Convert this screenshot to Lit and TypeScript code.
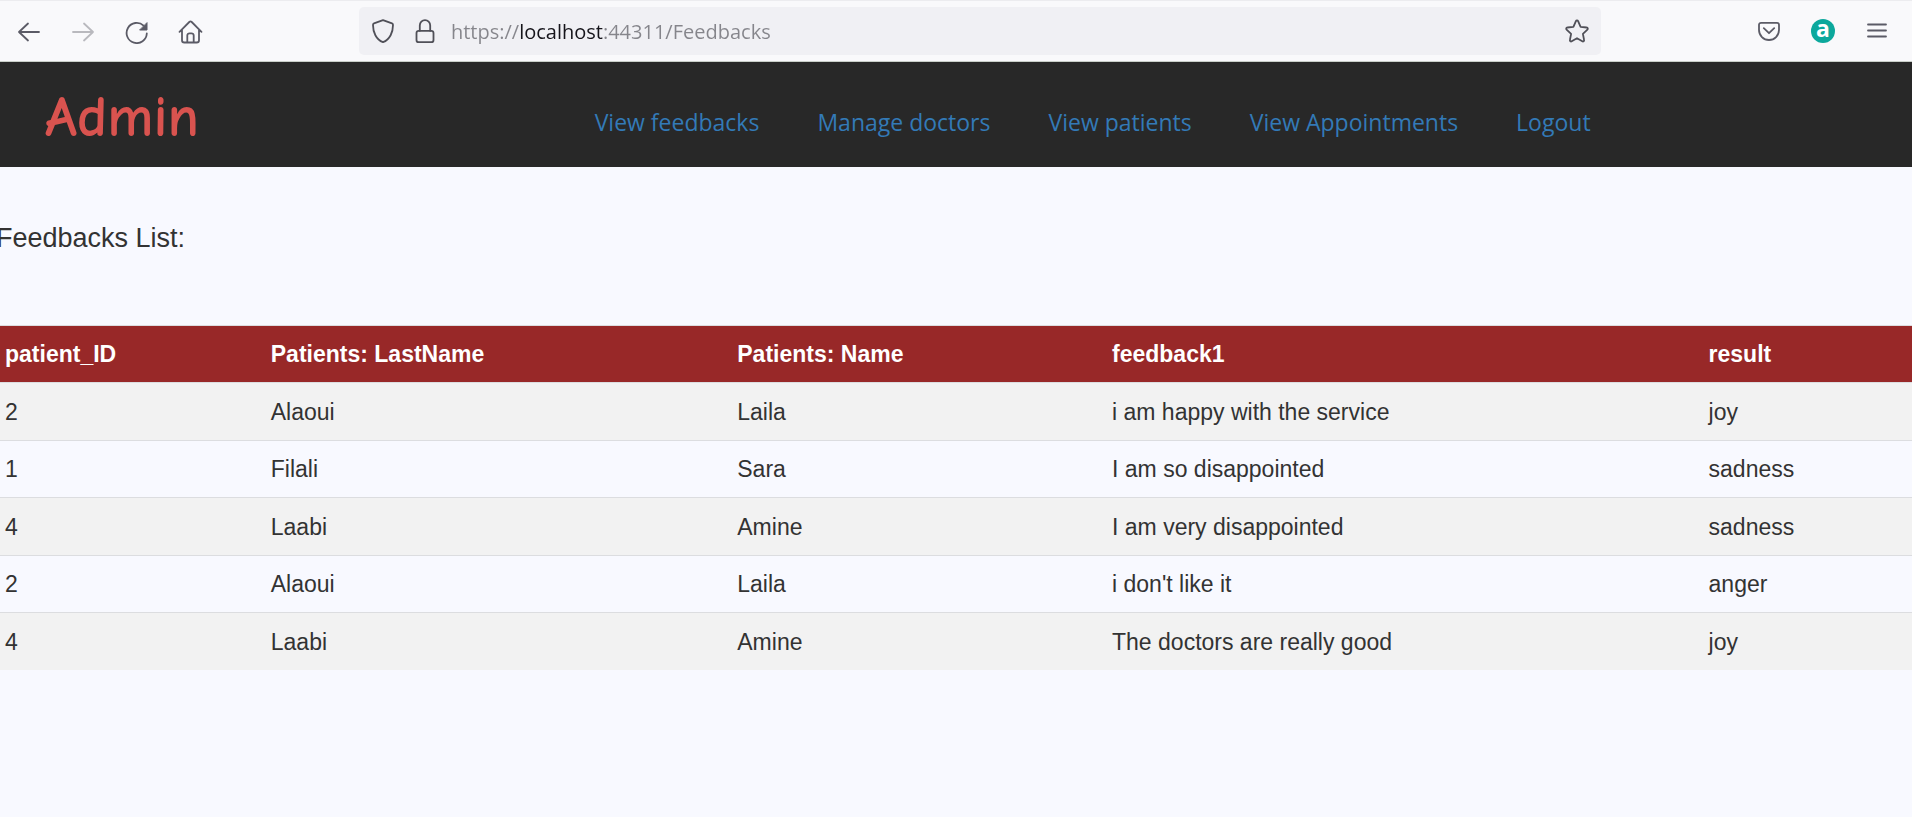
import { LitElement, html, css, svg, type TemplateResult } from "lit";
import { customElement, state } from "lit/decorators.js";

interface Feedback {
  patientId: number;
  lastName: string;
  name: string;
  text: string;
  result: string;
}

const FEEDBACKS: Feedback[] = [
  { patientId: 2, lastName: "Alaoui", name: "Laila", text: "i am happy with the service", result: "joy" },
  { patientId: 1, lastName: "Filali", name: "Sara", text: "I am so disappointed", result: "sadness" },
  { patientId: 4, lastName: "Laabi", name: "Amine", text: "I am very disappointed", result: "sadness" },
  { patientId: 2, lastName: "Alaoui", name: "Laila", text: "i don't like it", result: "anger" },
  { patientId: 4, lastName: "Laabi", name: "Amine", text: "The doctors are really good", result: "joy" },
];

const LINKS = ["View feedbacks", "Manage doctors", "View patients", "View Appointments", "Logout"];

const ICONS = {
  back: svg`<path d="M23 14H3M12 5.5 3 14l9 8.5"/>`,
  forward: svg`<path d="M3 14h20M14 5.5l9 8.5-9 8.5"/>`,
  reload: svg`<path d="M22.8 15.5A10.1 10.1 0 1 1 19.6 7.6"/><path class="solid" d="M23 5v7h-7z"/>`,
  home: svg`<path d="M1.5 13.8 11.3 4a1.7 1.7 0 0 1 2.4 0l9.8 9.8M4 12v10.2a2.3 2.3 0 0 0 2.3 2.3h12.4a2.3 2.3 0 0 0 2.3-2.3V12M9.3 24.5v-7a2.2 2.2 0 0 1 2.2-2.2h2a2.2 2.2 0 0 1 2.2 2.2v7"/>`,
  shield: svg`<path d="M13 2.2 22 5.4a1.6 1.6 0 0 1 1 1.6c0 7-3 14.5-10 17.2C6 21.5 3 14 3 7a1.6 1.6 0 0 1 1-1.6z"/>`,
  lock: svg`<rect x="4.5" y="12.8" width="17" height="11.400" rx="2.300"/><path d="M7.8 12.8V7.4a5.2 5.2 0 0 1 10.4 0v5.4"/>`,
  star: svg`<path d="M11.9 3.2a1.2 1.2 0 0 1 2.2 0l2.5 5.6 6.100.7a1.200 1.200 0 0 1 .7 2.100l-4.500 4.200 1.200 6.200a1.200 1.200 0 0 1-1.800 1.300L13 20.200l-5.300 3.100a1.200 1.200 0 0 1-1.800-1.300l1.200-6.200-4.500-4.200a1.200 1.200 0 0 1 .7-2.100l6.100-.7z"/>`,
  pocket: svg`<path d="M5 4.800h16a2 2 0 0 1 2 2V12a10 10 0 0 1-20 0V6.800a2 2 0 0 1 2-2zM7.800 10.200l5.200 5 5.200-5"/>`,
  menu: svg`<path d="M4 6.500h18M4 12.500h18M4 18.500h18"/>`,
};

const icon = (name: keyof typeof ICONS): TemplateResult =>
  html`<svg class="icon" viewBox="0 0 26 26" aria-hidden="true">${ICONS[name]}</svg>`;

@customElement("browser-bar")
export class BrowserBar extends LitElement {
  static styles = css`
    :host {
      display: block;
      border-top: 1px solid #ececef;
      border-bottom: 1px solid #c9cfc9;
      background: #f9f9fb;
    }
    .bar {
      display: flex;
      align-items: center;
      padding: 6px 8px 6px 2px;
    }
    .group {
      display: flex;
    }
    .space {
      flex: 10 1 0;
    }
    .tool {
      display: grid;
      place-items: center;
      width: 54px;
      height: 48px;
      padding: 0;
      border: 0;
      background: none;
      color: #5b5b66;
    }
    .tool:disabled {
      color: #b9b9be;
    }
    .icon {
      width: 26px;
      height: 26px;
      fill: none;
      stroke: currentColor;
      stroke-width: 1.8;
      stroke-linecap: round;
      stroke-linejoin: round;
    }
    .solid {
      fill: currentColor;
      stroke-width: 1;
    }
    .address {
      flex: 87 1 0;
      display: flex;
      align-items: center;
      gap: 10px;
      box-sizing: border-box;
      height: 48px;
      padding: 0 8px;
      border-radius: 5px;
      background: #f0f0f4;
    }
    .address .tool {
      width: 32px;
      color: #505058;
    }
    .url {
      flex: 1;
      min-width: 0;
      height: 32px;
      padding: 2px 0 0;
      border: 0;
      outline: 0;
      font: 20px/32px "Open Sans", "Noto Sans", sans-serif;
      color: transparent;
      caret-color: #15141a;
      background: linear-gradient(90deg, #85858b 69px, #15141a 69px, #15141a 152px, #85858b 152px);
      -webkit-background-clip: text;
      background-clip: text;
    }
    .badge {
      width: 24px;
      height: 24px;
      border-radius: 50%;
      background: #0ca89c;
      color: #fff;
      font: bold 23px/19px "Open Sans", "Noto Sans", sans-serif;
      text-align: center;
    }
  `;

  @state() private url = "https://localhost:44311/Feedbacks";

  render() {
    return html`
      <div class="bar">
        <div class="group">
          <button class="tool" aria-label="Back">${icon("back")}</button>
          <button class="tool" aria-label="Forward" disabled>${icon("forward")}</button>
          <button class="tool" aria-label="Reload">${icon("reload")}</button>
          <button class="tool" aria-label="Home">${icon("home")}</button>
        </div>
        <div class="space"></div>
        <div class="address">
          <button class="tool" aria-label="Tracking protection">${icon("shield")}</button>
          <button class="tool" aria-label="Connection security">${icon("lock")}</button>
          <input class="url" type="text" aria-label="Address" spellcheck="false" .value=${this.url} />
          <button class="tool" aria-label="Bookmark">${icon("star")}</button>
        </div>
        <div class="space"></div>
        <div class="group">
          <button class="tool" aria-label="Pocket">${icon("pocket")}</button>
          <button class="tool" aria-label="Account"><span class="badge">a</span></button>
          <button class="tool" aria-label="Menu">${icon("menu")}</button>
        </div>
      </div>
    `;
  }
}

@customElement("admin-header")
export class AdminHeader extends LitElement {
  static styles = css`
    :host {
      display: block;
      background: #282828;
    }
    .header {
      display: flex;
      padding: 22px 0 15px;
    }
    .brand {
      flex: 0 0 31.1%;
      box-sizing: border-box;
      padding-left: 45px;
      font: 700 58px/68px "Comic Sans MS", "Comic Neue", Lato, sans-serif;
      color: #d9534f;
    }
    .links {
      display: flex;
      gap: 58px;
      margin: 0;
      padding: 21px 0 0;
      list-style: none;
      white-space: nowrap;
    }
    .link {
      font: 23px/34px "Open Sans", "Noto Sans", sans-serif;
      color: #337ab7;
      text-decoration: none;
    }
  `;

  render() {
    return html`
      <header class="header">
        <div class="brand">Admin</div>
        <nav>
          <ul class="links">
            ${LINKS.map((label) => html`<li><a class="link" href="#">${label}</a></li>`)}
          </ul>
        </nav>
      </header>
    `;
  }
}

@customElement("feedback-table")
export class FeedbackTable extends LitElement {
  static styles = css`
    :host {
      display: block;
    }
    .table {
      width: 100%;
      table-layout: fixed;
      border-collapse: separate;
      border-spacing: 0;
      font-size: 23px;
      line-height: 32px;
    }
    .id { width: 13.9%; }
    .last { width: 24.4%; }
    .first { width: 19.6%; }
    .text { width: 31.2%; }
    .cell {
      height: 56px;
      padding: 0 0 0 5px;
      border-top: 1px solid #dcdde0;
      text-align: left;
      vertical-align: middle;
    }
    .head {
      background: #982828;
      color: #fff;
    }
    .row:nth-child(odd) {
      background: #f2f2f2;
    }
    .row:nth-child(odd) .cell {
      height: 57px;
    }
  `;

  @state() private rows: Feedback[] = FEEDBACKS;

  render() {
    return html`
      <table class="table">
        <colgroup>
          <col class="id" /><col class="last" /><col class="first" /><col class="text" /><col />
        </colgroup>
        <thead>
          <tr class="head">
            ${["patient_ID", "Patients: LastName", "Patients: Name", "feedback1", "result"].map(
              (title) => html`<th class="cell" scope="col">${title}</th>`
            )}
          </tr>
        </thead>
        <tbody>
          ${this.rows.map(
            (row) => html`
              <tr class="row">
                <td class="cell">${row.patientId}</td>
                <td class="cell">${row.lastName}</td>
                <td class="cell">${row.name}</td>
                <td class="cell">${row.text}</td>
                <td class="cell">${row.result}</td>
              </tr>
            `
          )}
        </tbody>
      </table>
    `;
  }
}

@customElement("app-root")
export class AppRoot extends LitElement {
  static styles = css`
    :host {
      display: block;
      min-height: 100vh;
      overflow-x: hidden;
      background: #f8f9ff;
      color: #333;
      font-family: "Liberation Sans", Arial, sans-serif;
    }
    .title {
      margin: 0 0 0 -4px;
      padding: 52px 0 68px;
      font-size: 27px;
      font-weight: 400;
      line-height: 38px;
    }
  `;

  render() {
    return html`
      <browser-bar></browser-bar>
      <admin-header></admin-header>
      <main>
        <h1 class="title">Feedbacks List:</h1>
        <feedback-table></feedback-table>
      </main>
    `;
  }
}
